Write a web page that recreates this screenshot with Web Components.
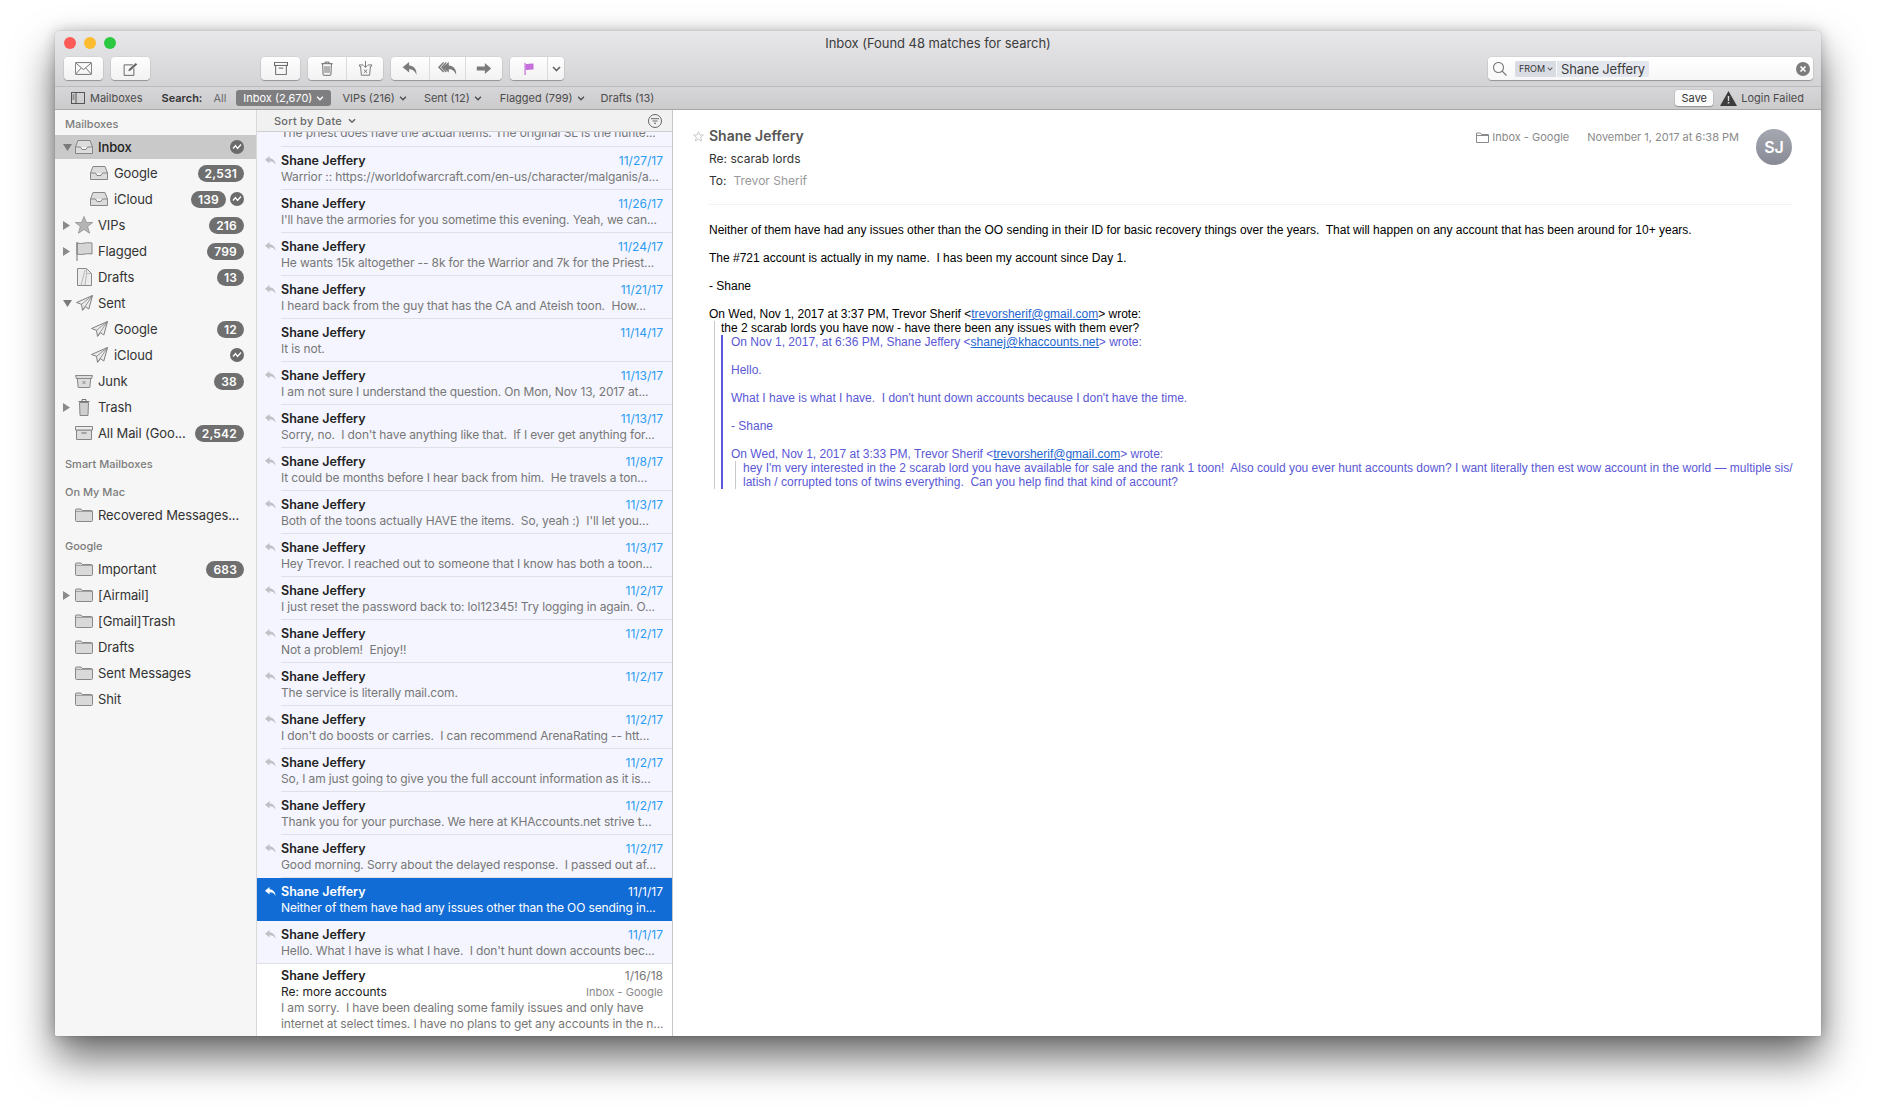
<!DOCTYPE html>
<html lang="en">
<head>
<meta charset="utf-8">
<title>Inbox</title>
<style>
  html, body { margin: 0; height: 100%; background: #fff; overflow: hidden; }
  body { box-sizing: border-box; padding: 31px 56px 80px 55px; display: flex; font-family: Inter, "Liberation Sans", sans-serif; }
</style>
</head>
<body>
<mail-window>
  <mail-toolbar slot="toolbar" title-text="Inbox (Found 48 matches for search)">
    <tool-group><tool-btn icon="mail"></tool-btn></tool-group>
    <tool-group style="margin-left:8px"><tool-btn icon="compose"></tool-btn></tool-group>
    <tool-group style="margin-left:111px"><tool-btn icon="archive"></tool-btn></tool-group>
    <tool-group style="margin-left:8px"><tool-btn icon="trash" width="38"></tool-btn><tool-btn icon="junk" width="37"></tool-btn></tool-group>
    <tool-group style="margin-left:8px"><tool-btn icon="reply" width="38"></tool-btn><tool-btn icon="replyall" width="36"></tool-btn><tool-btn icon="forward" width="37"></tool-btn></tool-group>
    <tool-group style="margin-left:8px"><tool-btn icon="flag" width="37"></tool-btn><tool-btn icon="chev" width="17"></tool-btn></tool-group>
    <search-field style="margin-left:auto"></search-field>
  </mail-toolbar>
  <fav-bar slot="favbar"></fav-bar>
  <mail-sidebar slot="sidebar">
    <side-label>Mailboxes</side-label>
    <side-row icon="inbox" label="Inbox" twisty="open" selected activity></side-row>
    <side-row icon="inbox" label="Google" level="1" count="2,531"></side-row>
    <side-row icon="inbox" label="iCloud" level="1" count="139" activity></side-row>
    <side-row icon="star" label="VIPs" twisty="closed" count="216"></side-row>
    <side-row icon="sflag" label="Flagged" twisty="closed" count="799"></side-row>
    <side-row icon="doc" label="Drafts" count="13"></side-row>
    <side-row icon="plane" label="Sent" twisty="open"></side-row>
    <side-row icon="plane" label="Google" level="1" count="12"></side-row>
    <side-row icon="plane" label="iCloud" level="1" activity></side-row>
    <side-row icon="sjunk" label="Junk" count="38"></side-row>
    <side-row icon="can" label="Trash" twisty="closed"></side-row>
    <side-row icon="box" label="All Mail (Goo..." count="2,542"></side-row>
    <side-label gap>Smart Mailboxes</side-label>
    <side-label gap>On My Mac</side-label>
    <side-row icon="folder" label="Recovered Messages..."></side-row>
    <side-label gap>Google</side-label>
    <side-row icon="folder" label="Important" count="683"></side-row>
    <side-row icon="folder" label="[Airmail]" twisty="closed"></side-row>
    <side-row icon="folder" label="[Gmail]Trash"></side-row>
    <side-row icon="folder" label="Drafts"></side-row>
    <side-row icon="folder" label="Sent Messages"></side-row>
    <side-row icon="folder" label="Shit"></side-row>
  </mail-sidebar>
  <msg-list slot="list">
    <msg-row tail preview="The priest does have the actual items. The original SL is the hunte..."></msg-row>
    <msg-row replied date="11/27/17" preview="Warrior :: https://worldofwarcraft.com/en-us/character/malganis/a..."></msg-row>
    <msg-row date="11/26/17" preview="I'll have the armories for you sometime this evening. Yeah, we can..."></msg-row>
    <msg-row replied date="11/24/17" preview="He wants 15k altogether -- 8k for the Warrior and 7k for the Priest..."></msg-row>
    <msg-row replied date="11/21/17" preview="I heard back from the guy that has the CA and Ateish toon.  How..."></msg-row>
    <msg-row date="11/14/17" preview="It is not."></msg-row>
    <msg-row replied date="11/13/17" preview="I am not sure I understand the question. On Mon, Nov 13, 2017 at..."></msg-row>
    <msg-row replied date="11/13/17" preview="Sorry, no.  I don't have anything like that.  If I ever get anything for..."></msg-row>
    <msg-row replied date="11/8/17" preview="It could be months before I hear back from him.  He travels a ton..."></msg-row>
    <msg-row replied date="11/3/17" preview="Both of the toons actually HAVE the items.  So, yeah :)  I'll let you..."></msg-row>
    <msg-row replied date="11/3/17" preview="Hey Trevor. I reached out to someone that I know has both a toon..."></msg-row>
    <msg-row replied date="11/2/17" preview="I just reset the password back to: lol12345! Try logging in again. O..."></msg-row>
    <msg-row replied date="11/2/17" preview="Not a problem!  Enjoy!!"></msg-row>
    <msg-row replied date="11/2/17" preview="The service is literally mail.com."></msg-row>
    <msg-row replied date="11/2/17" preview="I don't do boosts or carries.  I can recommend ArenaRating -- htt..."></msg-row>
    <msg-row replied date="11/2/17" preview="So, I am just going to give you the full account information as it is..."></msg-row>
    <msg-row replied date="11/2/17" preview="Thank you for your purchase. We here at KHAccounts.net strive t..."></msg-row>
    <msg-row replied date="11/2/17" preview="Good morning. Sorry about the delayed response.  I passed out af..."></msg-row>
    <msg-row replied selected date="11/1/17" preview="Neither of them have had any issues other than the OO sending in..."></msg-row>
    <msg-row replied full date="11/1/17" preview="Hello. What I have is what I have.  I don't hunt down accounts bec..."></msg-row>
    <msg-row read date="1/16/18" subject="Re: more accounts" box="Inbox - Google" preview="I am sorry.  I have been dealing some family issues and only have" preview2="internet at select times. I have no plans to get any accounts in the n..."></msg-row>
  </msg-list>
  <read-pane slot="pane"></read-pane>
</mail-window>

<script>
const GREY = "#666";
const ICONS = {
  mail: `<svg width="17" height="13" viewBox="0 0 23 17" fill="none" stroke="${GREY}" stroke-width="1.200"><rect x=".5" y=".5" width="22" height="16" rx="1"/><path d="M1 1l10.5 9L22 1M1 16l7.5-8.2M22 16l-7.5-8.2"/></svg>`,
  compose: `<svg width="15" height="14" viewBox="0 0 20 18" fill="none" stroke="${GREY}" stroke-width="1.300"><path d="M13 3.500H1.500v14h13V8"/><path d="M7 12l1-3 9-8 2 2-9 8z" fill="${GREY}" stroke="none"/></svg>`,
  archive: `<svg width="14" height="13" viewBox="0 0 18 17" fill="none" stroke="${GREY}" stroke-width="1.300"><rect x=".5" y=".5" width="17" height="4"/><path d="M2 4.500v12h14v-12M6 8h6"/></svg>`,
  trash: `<svg width="12" height="15" viewBox="0 0 15 18" fill="none" stroke="${GREY}" stroke-width="1.200"><path d="M.5 3h14M5 3V1h5v2M2 3l.6 13.500a1 1 0 0 0 1 1h7.800a1 1 0 0 0 1-1L13 3M5 6v8.500M7.500 6v8.500M10 6v8.500"/></svg>`,
  junk: `<svg width="15" height="15" viewBox="0 0 18 19" fill="none" stroke="${GREY}" stroke-width="1.100"><path d="M1 5h5M12 5h5M1 5l.8 2h1l1 11h10.400l1-11h1L17 5M9 0v8M6.500 5.500L9 8l2.500-2.500M7 11l4 4M11 11l-4 4"/></svg>`,
  reply: `<svg width="16" height="13" viewBox="0 0 17 15" fill="#7b7b7b"><path d="M7.500 0L0 6l7.500 6V8.500c4 0 6.500 1.700 8.500 6.500 .5-6-2.500-10.500-8.500-11z"/></svg>`,
  replyall: `<svg width="21" height="13" viewBox="0 0 22 15" fill="#7b7b7b"><path d="M12.500 0L5 6l7.500 6V8.500c4 0 6.500 1.700 8.500 6.500 .5-6-2.500-10.500-8.500-11z"/><path d="M6 0L0 6l6 6 1.200-1L2.500 6l4.700-5zM9 0L3.500 6 9 12l1.100-.9L5.800 6l4.300-5.100z"/></svg>`,
  forward: `<svg width="16" height="11" viewBox="0 0 17 13" fill="#7b7b7b"><path d="M0 4h9.500V0L17 6.500 9.500 13V9H0z"/></svg>`,
  flag: `<svg width="10" height="12" viewBox="0 0 13 16"><path d="M.5 0h1.600v16H.5z" fill="#c56fdc"/><path d="M2 1c3 1.200 6-1 10.500 0v8C8 8 5 10.200 2 9z" fill="#c56fdc"/></svg>`,
  chev: `<svg width="9" height="6" viewBox="0 0 9 6" fill="none" stroke="#666" stroke-width="1.600"><path d="M1 1l3.500 3.500L8 1"/></svg>`,
  inbox: `<svg width="18" height="14" viewBox="0 0 18 14"><path d="M3 .5h12l2.500 6.500v6.500H.5V7z" fill="#dcdcdc" stroke="#868686"/><path d="M.5 7h5l1.500 2.500h4L12.500 7h5" fill="#f2f2f2" stroke="#868686"/></svg>`,
  star: `<svg width="18" height="18" viewBox="0 0 18 18"><path d="M9 .5l2.500 6h6.200l-5 4 1.900 6.800L9 13.500l-5.600 3.800L5.300 10.500l-5-4h6.200z" fill="#b4b4b4" stroke="#8a8a8a" stroke-width=".7"/></svg>`,
  sflag: `<svg width="17" height="19" viewBox="0 0 17 19"><path d="M1 1c5 1.800 9-1.400 15 0v11c-6-1.400-10 1.800-15 0z" fill="#d6d6d6" stroke="#888"/><path d="M1 0v19" stroke="#777"/></svg>`,
  doc: `<svg width="15" height="18" viewBox="0 0 15 18"><path d="M.5.500h9l5 5v12H.5z" fill="#ececec" stroke="#888"/><path d="M9.500.5v5h5M4 17.500L8 2M8 17.500L9.500 6" fill="none" stroke="#aaa" stroke-width=".8"/></svg>`,
  plane: `<svg width="17" height="16" viewBox="0 0 17 16"><path d="M16.500.5L.5 7.500l5 1.800 1 6 3-3.600 3.300 2.300z" fill="#ececec" stroke="#7f7f7f" stroke-linejoin="round"/><path d="M16.500.5L5.500 9.300M16.500.5L6.500 15.300" fill="none" stroke="#7f7f7f" stroke-width=".8"/></svg>`,
  sjunk: `<svg width="18" height="13" viewBox="0 0 18 13"><path d="M.5.500h17l-1 3h-.8l-.9 9H3.200l-.9-9h-.8z" fill="#dcdcdc" stroke="#868686"/><path d="M1.500 3.500h15M7.500 6l3 3M10.500 6l-3 3" fill="none" stroke="#777" stroke-width=".8"/></svg>`,
  can: `<svg width="12" height="17" viewBox="0 0 12 17"><path d="M1.500 3.500l.5 13h8l.5-13z" fill="#cfcfcf" stroke="#868686"/><path d="M.5 2.500h11M4 2.500V.5h4v2" fill="none" stroke="#777"/></svg>`,
  box: `<svg width="18" height="14" viewBox="0 0 18 14"><path d="M1.500 4h15v9.500h-15z" fill="#dcdcdc" stroke="#868686"/><path d="M.5.500h17v3.500H.5z" fill="#ececec" stroke="#868686"/><path d="M6.500 7h5" stroke="#666"/></svg>`,
  folder: `<svg width="18" height="14" viewBox="0 0 18 14"><path d="M.5 2a1 1 0 0 1 1-1h4.500l1.200 1.500h9.300a1 1 0 0 1 1 1v9a1 1 0 0 1-1 1h-15a1 1 0 0 1-1-1z" fill="#d9d9d9" stroke="#888"/><path d="M.5 3.500h17" stroke="#888" stroke-width=".7"/></svg>`,
  pulse: `<svg width="14" height="14" viewBox="0 0 14 14"><circle cx="7" cy="7" r="7" fill="#6b6b6b"/><path d="M3 8.500l2.500-3 2 3L11 4.500" fill="none" stroke="#fff" stroke-width="1.300"/></svg>`,
  small: `<svg width="14" height="12" viewBox="0 0 14 12" fill="none" stroke="#555"><rect x=".5" y=".5" width="13" height="11"/><path d="M5 .5v11M1.500 3h2M1.500 5h2M1.500 7h2"/></svg>`,
  warn: `<svg width="17" height="15" viewBox="0 0 17 15"><path d="M8.500 0L17 15H0z" fill="#3c3c3c"/><path d="M7.700 5h1.600l-.2 5H7.900zM7.700 11h1.600v1.600H7.700z" fill="#ddd"/></svg>`,
  mag: `<svg width="14" height="14" viewBox="0 0 14 14" fill="none" stroke="#777" stroke-width="1.100"><circle cx="5.500" cy="5.500" r="5"/><path d="M9 9l4.500 4.500"/></svg>`,
  clear: `<svg width="14" height="14" viewBox="0 0 14 14"><circle cx="7" cy="7" r="7" fill="#7c7c7c"/><path d="M4.500 4.500l5 5M9.500 4.500l-5 5" stroke="#fff" stroke-width="1.600"/></svg>`,
  filter: `<svg width="14" height="14" viewBox="0 0 14 14" fill="none" stroke="#666"><circle cx="7" cy="7" r="6.500"/><path d="M3 4.700h8M4.500 7h5M6 9.300h2"/></svg>`,
  tinyfolder: `<svg width="13" height="11" viewBox="0 0 13 11" fill="none" stroke="#8a8a8a"><path d="M.5 1h4l1 1.500h7v8H.5zM.5 3.500h12"/></svg>`,
  arrow: `<svg width="11" height="9" viewBox="0 0 11 9" fill="currentColor"><path d="M4.500 0L0 3.700l4.500 3.700V5.200c3 0 4.700 1 6 3.800C10.500 5 8 2.400 4.500 2.200z"/></svg>`,
  star2: `<svg width="11" height="11" viewBox="0 0 11 11" fill="none" stroke="#c4c4c4" stroke-width=".9"><path d="M5.500.8l1.400 3.200h3.400L7.600 6.200l1 3.800-3.100-2.100L2.400 10l1-3.800L.7 4h3.400z"/></svg>`
};

class MailWindow extends HTMLElement {
  constructor() {
    super();
    this.attachShadow({ mode: "open" }).innerHTML = `
      <style>
        :host { flex: 1; min-width: 0; display: flex; flex-direction: column; border-radius: 5px 5px 2px 2px;
                overflow: hidden; background: #fff;
                box-shadow: 0 22px 42px rgba(0,0,0,.58), 0 0 14px rgba(0,0,0,.22), 0 0 1px rgba(0,0,0,.4); }
        .body { flex: 1; min-height: 0; display: flex; }
        ::slotted([slot=sidebar]) { width: 202px; flex: none; }
        ::slotted([slot=list]) { width: 416px; flex: none; }
        ::slotted([slot=pane]) { flex: 1; min-width: 0; }
      </style>
      <slot name="toolbar"></slot>
      <slot name="favbar"></slot>
      <div class="body">
        <slot name="sidebar"></slot>
        <slot name="list"></slot>
        <slot name="pane"></slot>
      </div>`;
  }
}

class MailToolbar extends HTMLElement {
  constructor() {
    super();
    this.attachShadow({ mode: "open" }).innerHTML = `
      <style>
        :host { display: block; background: linear-gradient(#e8e7ea, #d3d3d5); border-bottom: 1px solid #bcbcbc; }
        .title { height: 24px; padding-bottom: 2px; display: flex; align-items: center; justify-content: center;
                 font-size: 13px; letter-spacing: -.05px; color: #3c3c3c; position: relative; }
        .lights { position: absolute; left: 9px; top: 6px; display: flex; gap: 8px; }
        .lights i { width: 12px; height: 12px; border-radius: 50%; }
        .row { display: flex; align-items: flex-start; height: 29px; padding: 0 8px 0 9px; }
      </style>
      <div class="title">
        <div class="lights">
          <i style="background:#fc5b57"></i><i style="background:#fdbb2f"></i><i style="background:#2bc840"></i>
        </div>
        <span>${this.getAttribute("title-text")}</span>
      </div>
      <div class="row"><slot></slot></div>`;
  }
}

class ToolGroup extends HTMLElement {
  constructor() {
    super();
    this.attachShadow({ mode: "open" }).innerHTML = `
      <style>
        :host { display: flex; height: 23px; border-radius: 4px; overflow: hidden; flex: none;
                background: linear-gradient(#fefefe, #f2f2f2);
                box-shadow: 0 0 0 .5px rgba(0,0,0,.08), 0 1px 1px rgba(0,0,0,.28); }
        ::slotted(tool-btn:not(:first-child)) { border-left: 1px solid #dadada; }
      </style>
      <slot></slot>`;
  }
}

class ToolBtn extends HTMLElement {
  constructor() {
    super();
    const w = this.getAttribute("width") || "39";
    this.attachShadow({ mode: "open" }).innerHTML = `
      <style>
        :host { display: flex; align-items: center; justify-content: center; box-sizing: border-box; width: ${w}px; }
      </style>
      ${ICONS[this.getAttribute("icon")]}`;
  }
}

class SearchField extends HTMLElement {
  constructor() {
    super();
    this.attachShadow({ mode: "open" }).innerHTML = `
      <style>
        :host { display: flex; align-items: center; width: 325px; height: 23px; box-sizing: border-box; padding: 0 3px 0 4px;
                background: linear-gradient(#fff, #f7f7f7); border-radius: 4px;
                box-shadow: 0 0 0 .5px rgba(0,0,0,.08), 0 1px 1px rgba(0,0,0,.28); }
        .mag { display: flex; margin: 0 8px 0 0; padding-left: 1px; }
        .from { display: flex; align-items: center; gap: 2px; height: 16px; width: 41px; box-sizing: border-box; padding-left: 4px;
                background: #d9dce3; border-radius: 2px 0 0 2px; font-size: 9px; color: #333; }
        .from svg { width: 6px; }
        .name { margin-left: 1px; height: 16px; line-height: 16px; padding: 0 4px; background: #e4e7ee;
                border-radius: 0 2px 2px 0; font-size: 13px; letter-spacing: -.15px; color: #3c3c3c; }
        .x { margin-left: auto; display: flex; }
      </style>
      <span class="mag">${ICONS.mag}</span>
      <span class="from">FROM ${ICONS.chev}</span>
      <span class="name">Shane Jeffery</span>
      <span class="x">${ICONS.clear}</span>`;
  }
}

class FavBar extends HTMLElement {
  constructor() {
    super();
    const chev = `<svg width="8" height="5" viewBox="0 0 9 6" fill="none" stroke="currentColor" stroke-width="1.600"><path d="M1 1l3.500 3.500L8 1"/></svg>`;
    this.attachShadow({ mode: "open" }).innerHTML = `
      <style>
        :host { display: flex; align-items: center; height: 22px; padding-left: 16px; flex: none;
                background: linear-gradient(#d6d5d8, #cbcbcc); border-bottom: 1px solid #a8a8a8;
                font-size: 11px; color: #4c4c4c; }
        span { display: inline-flex; align-items: center; gap: 4px; white-space: nowrap; }
        b { font-weight: 600; color: #333; }
        .pill { height: 16px; padding: 0 7px; background: #7e7e81; color: #fff; border-radius: 3px; }
        .save { height: 16px; width: 38px; justify-content: center; background: #fbfbfb; border-radius: 3px; color: #333;
                box-shadow: 0 0 0 .5px rgba(0,0,0,.1), 0 1px 1px rgba(0,0,0,.25); }
      </style>
      <span>${ICONS.small}</span>
      <span style="margin-left:5px">Mailboxes</span>
      <b style="margin-left:19px">Search:</b>
      <span style="margin-left:11px;color:#6a6a6a">All</span>
      <span class="pill" style="margin-left:10px">Inbox (2,670) ${chev}</span>
      <span style="margin-left:11px">VIPs (216) ${chev}</span>
      <span style="margin-left:17px">Sent (12) ${chev}</span>
      <span style="margin-left:18px">Flagged (799) ${chev}</span>
      <span style="margin-left:16px">Drafts (13)</span>
      <span class="save" style="margin-left:auto">Save</span>
      <span style="margin-left:7px">${ICONS.warn}</span>
      <span style="margin-left:4px;margin-right:17px">Login Failed</span>`;
  }
}

class MailSidebar extends HTMLElement {
  constructor() {
    super();
    this.attachShadow({ mode: "open" }).innerHTML = `
      <style>
        :host { display: block; box-sizing: border-box; background: #f6f6f6; border-right: 1px solid #d9d9d9; overflow: hidden; }
      </style>
      <slot></slot>`;
  }
}

class SideLabel extends HTMLElement {
  constructor() {
    super();
    this.attachShadow({ mode: "open" }).innerHTML = `
      <style>
        :host { display: block; box-sizing: border-box; height: 24px; padding: 8px 0 0 10px; line-height: 13px;
                font-size: 11px; font-weight: 500; color: #7c7c7c; }
        :host([gap]) { margin-top: 4px; }
      </style>
      <slot></slot>`;
  }
}

class SideRow extends HTMLElement {
  constructor() {
    super();
    const level = this.getAttribute("level") === "1";
    const twisty = this.getAttribute("twisty");
    const count = this.getAttribute("count");
    const tri = twisty === "open"
      ? `<svg width="9" height="7" viewBox="0 0 9 7"><path d="M0 0h9L4.500 7z" fill="#7a7a7a"/></svg>`
      : twisty === "closed"
        ? `<svg width="7" height="9" viewBox="0 0 7 9"><path d="M0 0l7 4.500L0 9z" fill="#8a8a8a"/></svg>`
        : "";
    this.attachShadow({ mode: "open" }).innerHTML = `
      <style>
        :host { display: flex; align-items: center; box-sizing: border-box; height: 26px; font-size: 13px; color: #333;
                border-block: 1px solid transparent; background-clip: padding-box; }
        :host([selected]) { background-color: #c9c9c9; color: #222; font-weight: 500; }
        .tri { width: 20px; flex: none; display: flex; box-sizing: border-box; padding-left: 8px; }
        .ic { width: 18px; flex: none; display: flex; justify-content: center; margin-left: ${level ? 15 : 0}px; }
        .label { margin-left: ${level ? 6 : 5}px; white-space: nowrap; letter-spacing: -.1px; }
        .end { margin-left: auto; padding-right: 12px; display: flex; align-items: center; gap: 4px; }
        .badge { height: 17px; line-height: 17px; padding: 0 7px; border-radius: 9px; background: #6f6f6f; color: #fff;
                 font-size: 12px; font-weight: 600; letter-spacing: .2px; }
        svg { display: block; }
      </style>
      <span class="tri">${tri}</span>
      <span class="ic">${ICONS[this.getAttribute("icon")]}</span>
      <span class="label">${this.getAttribute("label")}</span>
      <span class="end">
        ${count ? `<span class="badge">${count}</span>` : ""}
        ${this.hasAttribute("activity") ? ICONS.pulse : ""}
      </span>`;
  }
}

class MsgList extends HTMLElement {
  constructor() {
    super();
    this.attachShadow({ mode: "open" }).innerHTML = `
      <style>
        :host { display: flex; flex-direction: column; box-sizing: border-box; background: #fff; border-right: 1px solid #c6c6c6; overflow: hidden; }
        .sort { flex: none; height: 22px; box-sizing: border-box; display: flex; align-items: center; padding: 0 10px 0 17px; gap: 6px;
                background: #f1f1f1; border-bottom: 1px solid #cfcfcf; font-size: 11px; font-weight: 500; letter-spacing: .25px; color: #6a6a6a; }
        .sort .f { margin-left: auto; display: flex; }
        .rows { flex: 1; min-height: 0; overflow: hidden; }
      </style>
      <div class="sort">Sort by Date ${ICONS.chev.replace('width="9"', 'width="8"')}<span class="f">${ICONS.filter}</span></div>
      <div class="rows"><slot></slot></div>`;
  }
}

class MsgRow extends HTMLElement {
  constructor() {
    super();
    const a = (n) => this.getAttribute(n);
    const isTail = this.hasAttribute("tail");
    const isLong = this.hasAttribute("subject");
    this.attachShadow({ mode: "open" }).innerHTML = `
      <style>
        :host { display: flex; background: #f4f5fe; color: #777; font-size: 12px; line-height: 16px; }
        :host([read]) { background: #fff; }
        :host([selected]) { background: #126cd6; color: #fff; }
        .arrow { width: 24px; flex: none; box-sizing: border-box; padding: 9px 0 0 8px; color: #c0c0c6; }
        :host([selected]) .arrow { color: #fff; }
        .arrow svg { display: block; }
        .c { flex: 1; min-width: 0; box-sizing: border-box; height: 43px; padding: 6px 9px 0 0; border-bottom: 1px solid #dfdfe6; }
        :host([tail]) .c { height: 15px; padding-top: 0; overflow: hidden; }
        /* scrolled: only the bottom of this message's preview shows below the sort bar */
        :host([tail]) .p { margin-top: -7px; }
        :host([full]) { border-bottom: 1px solid #dfdfe6; }
        :host([full]) .c { border-bottom: 0; height: 42px; }
        :host([selected]) .c { border-bottom-color: #126cd6; }
        :host([read]) .c { height: 73px; padding-top: 4px; }
        .line { display: flex; justify-content: space-between; white-space: nowrap; height: 16px; }
        .name { font-size: 12.5px; font-weight: 600; color: #222; }
        .date { color: #2b9cf2; }
        :host([read]) .date { color: #777; }
        :host([selected]) .name, :host([selected]) .date { color: #fff; }
        .sub { color: #222; }
        .box { color: #8a8a8a; font-size: 11px; }
        .p { white-space: pre; overflow: hidden; letter-spacing: -.13px; }
      </style>
      <div class="arrow">${this.hasAttribute("replied") ? ICONS.arrow : ""}</div>
      <div class="c">
        ${isTail ? "" : `<div class="line"><span class="name">Shane Jeffery</span><span class="date">${a("date")}</span></div>`}
        ${isLong ? `<div class="line"><span class="sub">${a("subject")}</span><span class="box">${a("box")}</span></div>` : ""}
        <div class="p">${a("preview")}</div>
        ${a("preview2") ? `<div class="p">${a("preview2")}</div>` : ""}
      </div>`;
  }
}

class ReadPane extends HTMLElement {
  constructor() {
    super();
    this.attachShadow({ mode: "open" }).innerHTML = `
      <style>
        :host { display: block; background: #fff; overflow: hidden; padding: 0 29px 0 36px; }
        .head { position: relative; height: 94px; border-bottom: 1px solid #f2f2f2; font-size: 12px; color: #333; }
        .from { padding-top: 17px; height: 18px; line-height: 18px; font-size: 14px; font-weight: 600; color: #555; display: flex; }
        .star { margin-left: -16px; width: 16px; display: flex; align-items: center; }
        .subj { margin-top: 6px; line-height: 16px; }
        .to { margin-top: 6px; line-height: 16px; }
        .to span { color: #999; margin-left: 7px; }
        .meta { position: absolute; right: 53px; top: 20px; display: flex; align-items: center; font-size: 11px; color: #8a8a8a; line-height: 14px; }
        .meta svg { margin-right: 3px; }
        .avatar { position: absolute; right: 0; top: 19px; width: 36px; height: 36px; border-radius: 50%;
                  background: linear-gradient(#a6a8b1, #878a95); color: #fff; font-size: 16px; font-weight: 600;
                  display: flex; align-items: center; justify-content: center; }
        .msg { padding-top: 18px; font: 12px/14px "Liberation Sans", Arial, sans-serif; color: #000; }
        .msg p, .msg div, .q3 { white-space: pre; }
        p { margin: 0 0 14px; }
        a { color: #1e66d0; text-decoration: underline; }
        blockquote { margin: 0; }
        .q1 { margin: 0 0 0 5px; padding-left: 6px; border-left: 1px solid #c9c9c9; }
        .q2 { padding-left: 8px; border-left: 2px solid #5c59d8; color: #5a58d6; }
        .q3 { margin-left: 4px; padding-left: 7px; border-left: 1px solid #c9c9c9; }
      </style>
      <div class="head">
        <div class="from"><span class="star">${ICONS.star2}</span>Shane Jeffery</div>
        <div class="subj">Re: scarab lords</div>
        <div class="to">To:<span>Trevor Sherif</span></div>
        <div class="meta">${ICONS.tinyfolder}<span>Inbox - Google</span><span style="margin-left:18px">November 1, 2017 at 6:38 PM</span></div>
        <div class="avatar">SJ</div>
      </div>
      <div class="msg">
        <p>Neither of them have had any issues other than the OO sending in their ID for basic recovery things over the years.  That will happen on any account that has been around for 10+ years.</p>
        <p>The #721 account is actually in my name.  I has been my account since Day 1.</p>
        <p>- Shane</p>
        <div>On Wed, Nov 1, 2017 at 3:37 PM, Trevor Sherif &lt;<a>trevorsherif@gmail.com</a>&gt; wrote:</div>
        <blockquote class="q1">
          <div>the 2 scarab lords you have now - have there been any issues with them ever?</div>
          <blockquote class="q2">
            <p>On Nov 1, 2017, at 6:36 PM, Shane Jeffery &lt;<a>shanej@khaccounts.net</a>&gt; wrote:</p>
            <p>Hello.</p>
            <p>What I have is what I have.  I don't hunt down accounts because I don't have the time.</p>
            <p>- Shane</p>
            <div>On Wed, Nov 1, 2017 at 3:33 PM, Trevor Sherif &lt;<a>trevorsherif@gmail.com</a>&gt; wrote:</div>
            <blockquote class="q3">hey I'm very interested in the 2 scarab lord you have available for sale and the rank 1 toon!  Also could you ever hunt accounts down? I want literally then est wow account in the world — multiple sis/
latish / corrupted tons of twins everything.  Can you help find that kind of account?</blockquote>
          </blockquote>
        </blockquote>
      </div>`;
  }
}

customElements.define("mail-window", MailWindow);
customElements.define("mail-toolbar", MailToolbar);
customElements.define("tool-group", ToolGroup);
customElements.define("tool-btn", ToolBtn);
customElements.define("search-field", SearchField);
customElements.define("fav-bar", FavBar);
customElements.define("mail-sidebar", MailSidebar);
customElements.define("side-label", SideLabel);
customElements.define("side-row", SideRow);
customElements.define("msg-list", MsgList);
customElements.define("msg-row", MsgRow);
customElements.define("read-pane", ReadPane);
</script>
</body>
</html>
